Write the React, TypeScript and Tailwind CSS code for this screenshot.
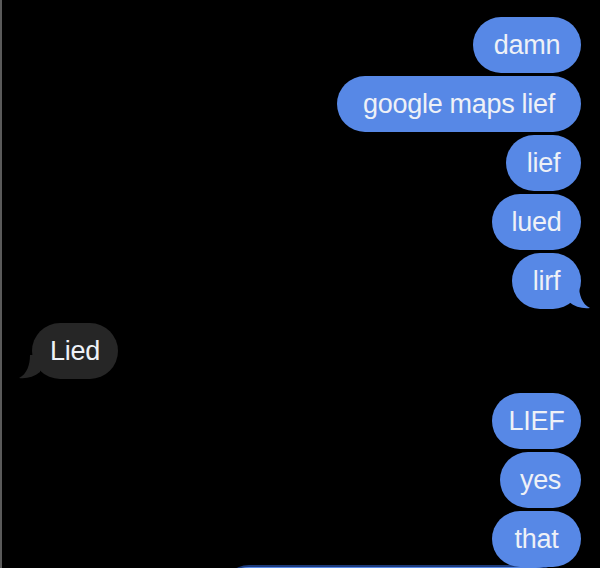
import React from "react";

type Msg = { text: string; me: boolean; w: string; tail?: boolean; mt?: string };

const msgs: Msg[] = [
  { text: "damn", me: true, w: "w-[108px]" },
  { text: "google maps lief", me: true, w: "w-[244px]" },
  { text: "lief", me: true, w: "w-[75px]" },
  { text: "lued", me: true, w: "w-[89px]" },
  { text: "lirf", me: true, w: "w-[69px]", tail: true },
  { text: "Lied", me: false, w: "w-[86px]", tail: true, mt: "mt-[11px]" },
  { text: "LIEF", me: true, w: "w-[89px]", mt: "mt-[11px]" },
  { text: "yes", me: true, w: "w-[81px]" },
  { text: "that", me: true, w: "w-[89px]" },
];

function TailRight() {
  return (
    <svg
      className="absolute bottom-0 right-[-10px]"
      width="22"
      height="24"
      viewBox="0 0 22 24"
    >
      <path d="M0 0 H10 C10 10 13 19 21 23 C14 24 6 22 0 17 Z" fill="#5788e6" />
    </svg>
  );
}

function TailLeft() {
  return (
    <svg
      className="absolute bottom-0 left-[-14px]"
      width="22"
      height="24"
      viewBox="0 0 22 24"
    >
      <path d="M22 0 H12 C12 10 9 19 1 23 C8 24 16 22 22 17 Z" fill="#262626" />
    </svg>
  );
}

export default function App() {
  return (
    <div
      className="w-[600px] h-[568px] overflow-hidden bg-black border-l-2 border-[#5a5a5a] flex flex-col gap-[3px] pt-[17px] pr-[19px] pl-[30px]"
      style={{ fontFamily: '"Liberation Sans", Arial, sans-serif' }}
    >
      {msgs.map((m, i) => (
        <div
          key={i}
          className={`flex shrink-0 ${m.me ? "justify-end" : "justify-start"} ${m.mt ?? ""}`}
        >
          <div
            className={`relative h-[56px] ${m.w} rounded-[28px] flex items-center justify-center text-[27px] tracking-[-0.3px] text-[#eef1f7] ${
              m.me ? "bg-[#5788e6]" : "bg-[#262626]"
            }`}
          >
            {m.tail && (m.me ? <TailRight /> : <TailLeft />)}
            <span className="relative">{m.text}</span>
          </div>
        </div>
      ))}
      <div className="flex shrink-0 justify-end pr-[17px] mt-[-5px]">
        <div className="h-[56px] w-[343px] rounded-[28px] bg-[#5788e6] border-t-2 border-[#1c3a7a]" />
      </div>
    </div>
  );
}
